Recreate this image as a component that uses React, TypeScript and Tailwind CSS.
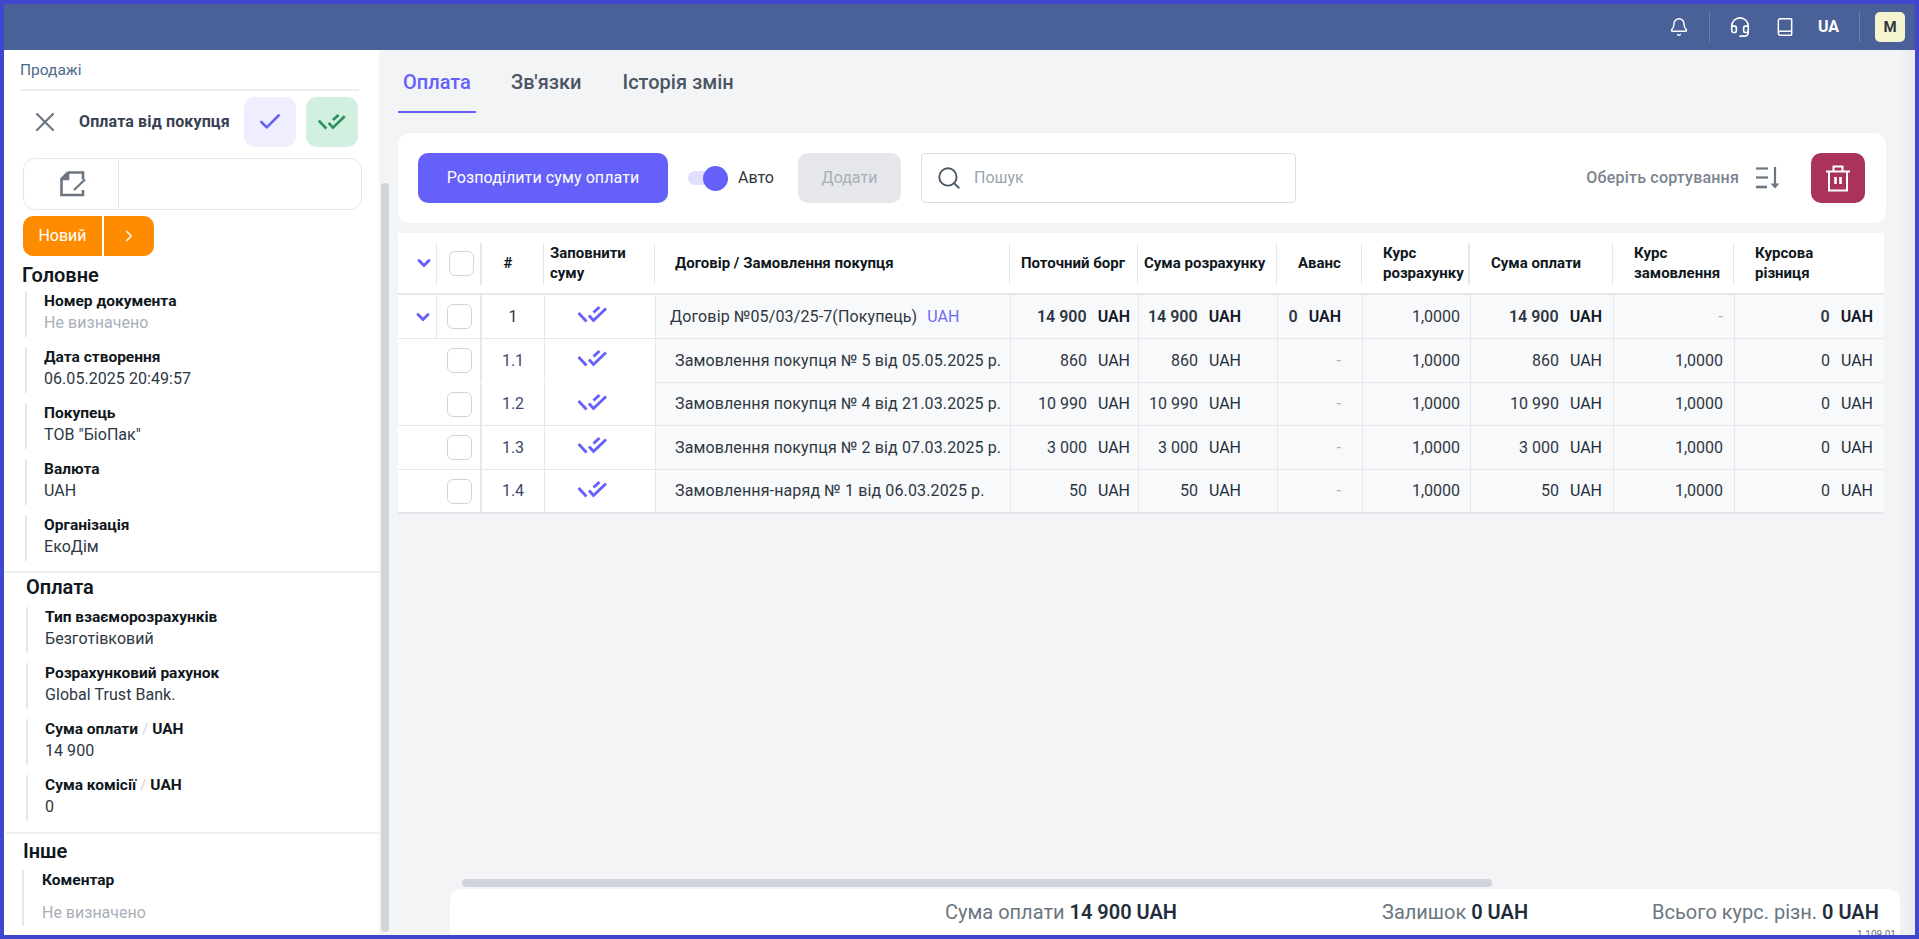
import React from "react";
import { Bell, Headset, Book, X, Check, Search, ChevronRight, ChevronDown } from "lucide-react";

function DoubleCheck({ color = "#6560fa", className = "" }: { color?: string; className?: string }) {
  return (
    <svg viewBox="0 0 29 17" className={className} fill="none" stroke={color} strokeWidth="2.9">
      <path d="M0.5 7 L8.5 15.5" />
      <path d="M11 9.5 L15.5 14.5 L28 2.5" />
      <path d="M15.5 6.5 L21.5 1" />
    </svg>
  );
}

function NoteIcon() {
  return (
    <svg viewBox="0 0 26 26" className="w-[26px] h-[26px] ml-[4px]" fill="none" stroke="#6b7680" strokeWidth="2.6">
      <path d="M8 1.5 H23 V8.5" />
      <path d="M8 1.5 L1.5 8 V24 H23 V19" />
      <path d="M8 1.5 V8 H1.5" fill="#6b7680" />
      <path d="M14 19 L25 8.5" strokeWidth="2.2" />
    </svg>
  );
}

function SortIcon() {
  return (
    <svg viewBox="0 0 26 24" className="w-[26px] h-[24px]" fill="none" stroke="#6b7680" strokeWidth="2.2">
      <path d="M1 2.5 H13" />
      <path d="M1 11.5 H13" />
      <path d="M1 21 H12" strokeWidth="2.6" />
      <path d="M20 1 V20" strokeWidth="2.2" />
      <path d="M15.5 17.5 H24.5 L20 22.5 Z" fill="#6b7680" stroke="none" />
    </svg>
  );
}

function TrashIcon() {
  return (
    <svg viewBox="0 0 26 27" className="w-[26px] h-[27px]" fill="none" stroke="#fff" strokeWidth="2">
      <path d="M1 6.5 H25" />
      <path d="M8.5 6 V1.5 H17.5 V6" />
      <path d="M4 6.5 V25.5 H22 V6.5" />
      <path d="M10.5 12 V19" strokeWidth="2.6" />
      <path d="M15.5 12 V19" strokeWidth="2.6" />
    </svg>
  );
}

function Field({ label, value, unit, muted, x = "ml-[21px]" }: { label: string; value: string; unit?: string; muted?: boolean; x?: string }) {
  return (
    <div className={`${x} h-[46px] mb-[10px] border-l-2 border-[#e5e7eb] pl-[17px] flex flex-col`}>
      <div className="text-[15.5px] leading-[20px] font-bold text-[#0f1720] whitespace-nowrap">
        {label}
        {unit && (
          <>
            <span className="text-[#d1d5db] font-normal"> / </span>
            {unit}
          </>
        )}
      </div>
      <div className={`text-[16px] leading-[24px] whitespace-nowrap tracking-[0.05px] ${muted ? "text-[#a8afb8]" : "text-[#2e3742]"}`}>{value}</div>
    </div>
  );
}

function Checkbox() {
  return <div className="w-[25px] h-[25px] rounded-[6px] border border-[#d1d5db] bg-white" />;
}

const W = ["w-[39px]", "w-[45px]", "w-[62px]", "w-[111px]", "w-[355px]", "w-[128px]", "w-[139px]", "w-[85px]", "w-[108px]", "w-[143px]", "w-[121px]", "w-[150px]"];

function Head({ i, children, className = "", line = "bg-[#e5e7eb] w-px" }: { i: number; children?: React.ReactNode; className?: string; line?: string }) {
  return (
    <div className={`${W[i]} shrink-0 h-full relative flex items-center text-[15px] leading-[20px] font-bold text-[#0f1720] ${className}`}>
      {children}
      {i < 11 && <span className={`absolute right-0 top-[10px] bottom-[8px] ${line}`} />}
    </div>
  );
}

type Row = {
  n: string;
  name: string;
  debt: string;
  sum: string;
  adv: string;
  order: string;
  rowH: string;
  bold?: boolean;
  top?: boolean;
  noLine?: boolean;
  nameCls: string;
};

const rows: Row[] = [
  { n: "1", name: "Договір №05/03/25-7(Покупець)", debt: "14 900", sum: "14 900", adv: "0", order: "-", rowH: "h-[44px]", bold: true, top: true, nameCls: "pl-[14px]" },
  { n: "1.1", name: "Замовлення покупця № 5 від 05.05.2025 р.", debt: "860", sum: "860", adv: "-", order: "1,0000", rowH: "h-[44px]", noLine: true, nameCls: "pl-[19px]" },
  { n: "1.2", name: "Замовлення покупця № 4 від 21.03.2025 р.", debt: "10 990", sum: "10 990", adv: "-", order: "1,0000", rowH: "h-[43px]", nameCls: "pl-[19px]" },
  { n: "1.3", name: "Замовлення покупця № 2 від 07.03.2025 р.", debt: "3 000", sum: "3 000", adv: "-", order: "1,0000", rowH: "h-[44px]", nameCls: "pl-[19px]" },
  { n: "1.4", name: "Замовлення-наряд № 1 від 06.03.2025 р.", debt: "50", sum: "50", adv: "-", order: "1,0000", rowH: "h-[42px]", noLine: true, nameCls: "pl-[19px]" },
];

function Money({ v, bold, i, pad }: { v: string; bold?: boolean; i: number; pad: string }) {
  return (
    <div className={`${W[i]} shrink-0 h-full bg-[#f8f9fa] border-l border-[#e5e7eb] flex items-center justify-end ${pad} text-[16px] text-[#2e3742] whitespace-pre ${bold ? "font-semibold" : ""}`}>
      {v}
      <span className={`ml-[11px] ${bold ? "text-[#111827]" : "text-[#1f2d3d]"}`}>UAH</span>
    </div>
  );
}

function Plain({ v, i, pad = "pr-[10px]" }: { v: string; i: number; pad?: string }) {
  return (
    <div className={`${W[i]} shrink-0 h-full bg-[#f8f9fa] border-l border-[#e5e7eb] flex items-center justify-end ${pad} text-[16px] ${v === "-" ? "text-[#a8afb8]" : "text-[#2e3742]"}`}>
      {v}
    </div>
  );
}

export default function App() {
  return (
    <div className="w-[1919px] h-[939px] border-4 border-[#4146cf] flex flex-col overflow-hidden bg-[#f3f4f6] text-[#2e3742]" style={{ fontFamily: "Roboto, 'Noto Sans', sans-serif" }}>
      {/* Header */}
      <header className="h-[46px] shrink-0 bg-[#4a6098] flex items-center justify-end pr-[10px] text-white">
        <Bell className="w-[20px] h-[20px] mr-[20px]" strokeWidth={1.7} />
        <span className="w-px h-[30px] bg-[#717f9b] mr-[19px]" />
        <Headset className="w-[22px] h-[22px] mr-[24px]" strokeWidth={1.8} />
        <Book className="w-[20px] h-[20px] mr-[23px]" strokeWidth={1.8} />
        <span className="text-[16px] font-bold mr-[20px]">UA</span>
        <span className="w-px h-[30px] bg-[#717f9b] mr-[15px]" />
        <div className="w-[30px] h-[30px] rounded-[5px] bg-[#f4f5ce] text-[#2e3742] flex items-center justify-center text-[15px] font-bold">M</div>
      </header>

      <div className="flex-1 flex min-h-0">
        {/* Sidebar */}
        <aside className="w-[375px] shrink-0 bg-white pt-[13px] flex flex-col">
          <div className="ml-[16px] mr-[20px] h-[28px] text-[15.5px] leading-[14px] text-[#4a6a8a] border-b-2 border-[#eceef0]">Продажі</div>
          <div className="flex items-center mt-[6px] h-[50px] ml-[25px]">
            <X className="w-[32px] h-[32px] text-[#6b7680]" strokeWidth={1.6} />
            <div className="ml-[18px] w-[165px] text-[16px] tracking-[0.13px] font-bold text-[#374151] whitespace-nowrap">Оплата від покупця</div>
            <div className="w-[52px] h-[50px] rounded-[11px] bg-[#efeefe] flex items-center justify-center">
              <Check className="w-[26px] h-[26px] text-[#6560fa]" strokeWidth={2.4} />
            </div>
            <div className="ml-[10px] w-[52px] h-[50px] rounded-[11px] bg-[#d1f0df] flex items-center justify-center">
              <DoubleCheck color="#2f8f5f" className="w-[28px] h-[16px]" />
            </div>
          </div>
          <div className="ml-[19px] w-[339px] h-[52px] mt-[11px] rounded-[12px] border border-[#e5e7eb] flex">
            <div className="w-[95px] h-full border-r border-[#e5e7eb] flex items-center justify-center">
              <NoteIcon />
            </div>
          </div>
          <div className="ml-[19px] mt-[6px] flex h-[40px] text-white">
            <div className="w-[79px] rounded-l-[10px] bg-[#ff8c00] flex items-center justify-center text-[16px]">Новий</div>
            <div className="ml-[2px] w-[50px] rounded-r-[10px] bg-[#ff8c00] flex items-center justify-center">
              <ChevronRight className="w-[18px] h-[18px]" strokeWidth={1.8} />
            </div>
          </div>
          <div className="ml-[18px] mt-[7px] h-[25px] text-[20px] leading-[25px] font-semibold text-[#0f1720]">Головне</div>
          <div className="mt-[3px]">
            <Field label="Номер документа" value="Не визначено" muted />
            <Field label="Дата створення" value="06.05.2025 20:49:57" />
            <Field label="Покупець" value={'ТОВ "БіоПак"'} />
            <Field label="Валюта" value="UAH" />
            <Field label="Організація" value="ЕкоДім" />
          </div>
          <div className="border-t-2 border-[#eceef0] h-[36px] pl-[22px] text-[20px] leading-[29px] font-semibold text-[#0f1720]">Оплата</div>
          <div>
            <Field x="ml-[22px]" label="Тип взаєморозрахунків" value="Безготівковий" />
            <Field x="ml-[22px]" label="Розрахунковий рахунок" value="Global Trust Bank." />
            <Field x="ml-[22px]" label="Сума оплати" unit="UAH" value="14 900" />
            <Field x="ml-[22px]" label="Сума комісії" unit="UAH" value="0" />
          </div>
          <div className="border-t-2 border-[#eceef0] mt-[1px] ml-[2px] h-[38px] pl-[17px] text-[20px] leading-[34px] font-semibold text-[#0f1720]">Інше</div>
          <div className="ml-[18px] h-[56px] border-l-2 border-[#e5e7eb] pl-[18px] flex flex-col">
            <div className="text-[15.5px] leading-[20px] font-bold text-[#0f1720]">Коментар</div>
            <div className="text-[16px] leading-[24px] mt-[11px] text-[#a8afb8]">Не визначено</div>
          </div>
        </aside>

        {/* Sidebar scrollbar */}
        <div className="w-[10px] shrink-0 pt-[133px] pb-[3px] pl-[2px]">
          <div className="w-[8px] h-full rounded-full bg-[#d1d5db]" />
        </div>

        {/* Main */}
        <main className="flex-1 min-w-0 flex flex-col pl-[9px] relative">
          <div className="absolute right-0 top-0 bottom-0 w-[18px] bg-gradient-to-r from-transparent to-[#e9ebee]" />
          <nav className="h-[83px] shrink-0 flex items-start text-[20px] font-medium text-[#4b5563] pt-[21px]">
            <div className="w-[78px] h-[42px] border-b-2 border-[#6560fa] text-[#6560fa] pl-[5px] leading-[22px]">Оплата</div>
            <div className="ml-[35px] leading-[22px]">Зв'язки</div>
            <div className="ml-[41px] leading-[22px]">Історія змін</div>
          </nav>

          <section className="w-[1488px] h-[90px] shrink-0 rounded-[12px] bg-white flex items-center pl-[20px] pr-[21px] relative">
            <div className="w-[250px] h-[50px] rounded-[10px] bg-[#6560fa] text-white text-[16px] tracking-[0.1px] flex items-center justify-center">Розподілити суму оплати</div>
            <div className="ml-[20px] w-[40px] h-[25px] relative flex items-center">
              <span className="w-[30px] h-[14px] rounded-full bg-[#e0dffd]" />
              <span className="absolute right-0 top-0 w-[25px] h-[25px] rounded-full bg-[#6560fa]" />
            </div>
            <span className="ml-[10px] w-[60px] text-[16px] text-[#2e3742]">Авто</span>
            <div className="w-[103px] h-[50px] rounded-[10px] bg-[#e5e7eb] text-[#a8afb8] text-[16px] flex items-center justify-center">Додати</div>
            <div className="ml-[20px] w-[375px] h-[50px] rounded-[4px] border border-[#d9dce1] flex items-center pl-[14px]">
              <Search className="w-[26px] h-[26px] text-[#4b5563]" strokeWidth={1.7} />
              <span className="ml-[12px] text-[16px] text-[#9ca3af]">Пошук</span>
            </div>
            <span className="ml-auto text-[16px] tracking-[0.2px] font-medium text-[#7a838e]">Оберіть сортування</span>
            <div className="ml-[16px] w-[26px]"><SortIcon /></div>
            <div className="ml-[30px] w-[54px] h-[50px] rounded-[10px] bg-[#aa3359] flex items-center justify-center">
              <TrashIcon />
            </div>
          </section>

          {/* Table */}
          <section className="w-[1486px] mt-[10px] shrink-0 border-b-2 border-[#e5e7eb] text-[14px] relative">
            <div className="h-[62px] bg-white border-b-2 border-[#e5e7eb] flex">
              <Head i={0} className="justify-center"><ChevronDown className="w-[20px] h-[20px] text-[#6560fa] ml-[12px]" strokeWidth={3.5} /></Head>
              <Head i={1} line="bg-[#e5e7eb] w-[2px]" className="justify-center"><span className="ml-[4px]"><Checkbox /></span></Head>
              <Head i={2} className="justify-center"><span className="mr-[10px]">#</span></Head>
              <Head i={3} className="pl-[6px]"><span>Заповнити<br />суму</span></Head>
              <Head i={4} className="pl-[20px]">Договір / Замовлення покупця</Head>
              <Head i={5} className="pl-[11px]">Поточний борг</Head>
              <Head i={6} className="pl-[6px]">Сума розрахунку</Head>
              <Head i={7} className="pl-[21px]">Аванс</Head>
              <Head i={8} line="bg-[#e5e7eb] w-[2px]" className="pl-[21px]"><span>Курс<br />розрахунку</span></Head>
              <Head i={9} className="pl-[21px]">Сума оплати</Head>
              <Head i={10} className="pl-[21px]"><span>Курс<br />замовлення</span></Head>
              <Head i={11} className="pl-[21px]"><span>Курсова<br />різниця</span></Head>
            </div>
            {rows.map((r, idx) => (
              <div key={r.n} className={`${r.rowH} flex ${idx < rows.length - 1 ? "border-b border-[#e5e7eb]" : ""} ${r.noLine ? "relative" : ""}`}>
                {r.noLine && idx === 1 && <span className="absolute left-0 -bottom-px w-[257px] h-px bg-white" />}
                <div className={`${W[0]} shrink-0 h-full bg-white flex items-center justify-center ${r.top ? "border-r border-[#e5e7eb]" : ""}`}>
                  {r.top && <ChevronDown className="w-[20px] h-[20px] text-[#6560fa] ml-[12px]" strokeWidth={3.5} />}
                </div>
                <div className={`${W[1]} shrink-0 h-full bg-white border-r-2 border-[#e5e7eb] flex items-center justify-center`}>
                  <span className="ml-[1px]"><Checkbox /></span>
                </div>
                <div className={`${W[2]} shrink-0 h-full bg-white flex items-center justify-center text-[16px] ${r.top ? "text-[#2e3742]" : "text-[#3b4a6b]"}`}>{r.n}</div>
                <div className={`${W[3]} shrink-0 h-full bg-white border-l border-[#e5e7eb] flex items-center justify-center pr-[15px]`}>
                  <DoubleCheck className="w-[29px] h-[17px] mb-[4px]" />
                </div>
                <div className={`${W[4]} shrink-0 h-full bg-[#f8f9fa] border-l border-[#e5e7eb] flex items-center ${r.nameCls} text-[16px] tracking-[0.13px] text-[#2e3742] whitespace-nowrap`}>
                  {r.name}
                  {r.top && <span className="ml-[10px] tracking-normal text-[#6f6bf0]">UAH</span>}
                </div>
                <Money v={r.debt} bold={r.bold} i={5} pad="pr-[8px]" />
                <Money v={r.sum} bold={r.bold} i={6} pad="pr-[36px]" />
                {r.adv === "-" ? <Plain v="-" i={7} pad="pr-[21px]" /> : <Money v={r.adv} bold={r.bold} i={7} pad="pr-[21px]" />}
                <Plain v="1,0000" i={8} />
                <Money v={r.sum} bold={r.bold} i={9} pad="pr-[11px]" />
                <Plain v={r.order} i={10} pad="pr-[11px]" />
                <Money v="0" bold={r.bold} i={11} pad="pr-[11px]" />
              </div>
            ))}
          </section>

          <div className="flex-1" />
          <div className="ml-[64px] w-[1030px] h-[8px] rounded-full bg-[#d1d5db] shrink-0" />
          <footer className="ml-[52px] mt-[2px] w-[1450px] h-[46px] shrink-0 rounded-t-[12px] bg-white flex items-center text-[20px] text-[#6b7680] relative z-10 overflow-hidden">
            <div className="ml-[495px] w-[437px] whitespace-nowrap">Сума оплати <b className="font-semibold text-[#1f2d3d]">14 900 UAH</b></div>
            <div className="w-[270px] whitespace-nowrap">Залишок <b className="font-semibold text-[#1f2d3d]">0 UAH</b></div>
            <div className="whitespace-nowrap">Всього курс. різн. <b className="font-semibold text-[#1f2d3d]">0 UAH</b></div>
            <span className="absolute right-[4px] bottom-[-5px] text-[10px] leading-[10px] text-[#6b7680]">1.109.01</span>
          </footer>
        </main>
      </div>
    </div>
  );
}
